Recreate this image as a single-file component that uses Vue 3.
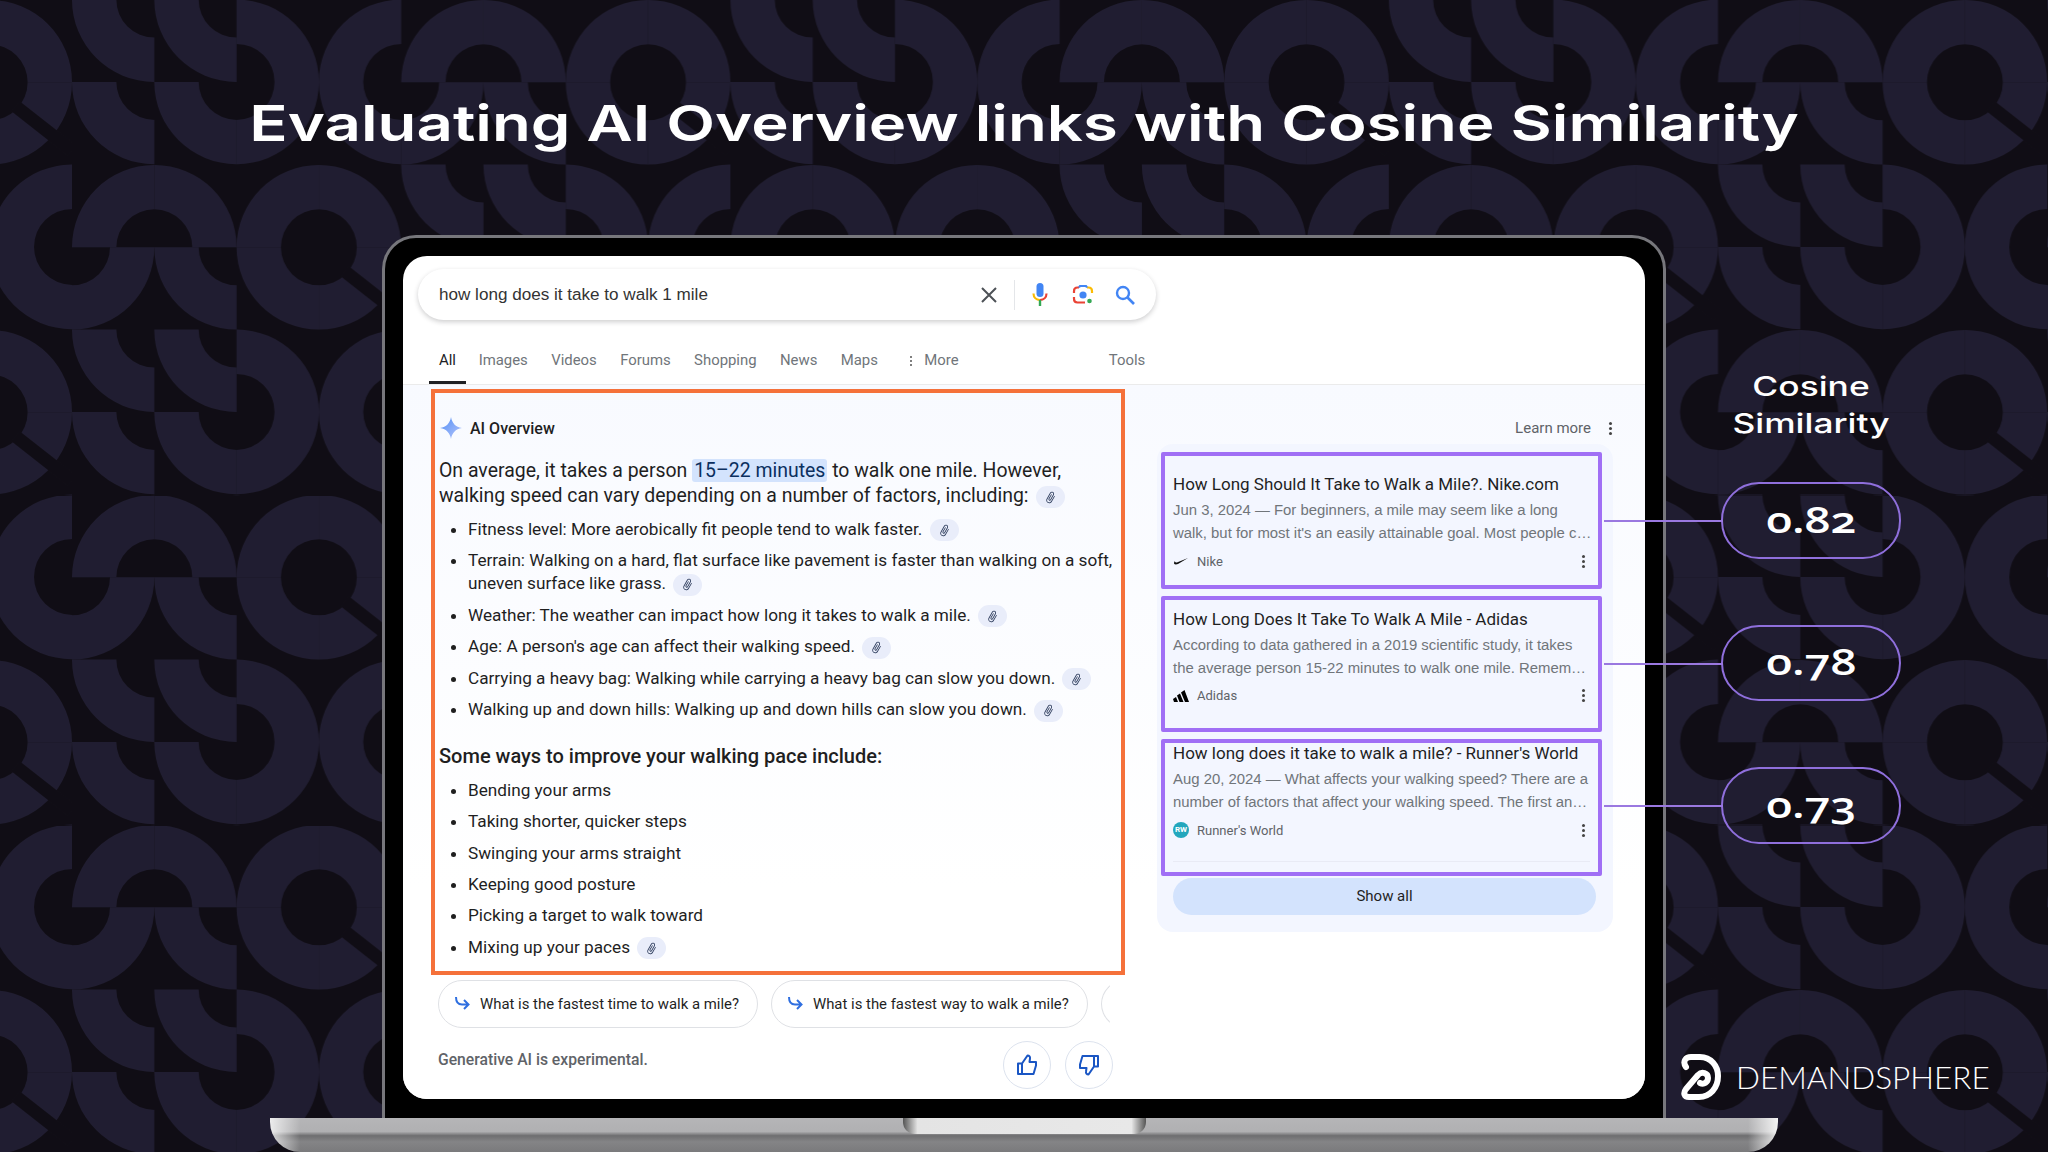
<template>
  <div class="page">
    <svg class="bg" width="2048" height="1152">
      <defs>
        <pattern id="tile" patternUnits="userSpaceOnUse" x="72" y="165" :width="unit * 2" height="330">
          <g v-for="u in units" :key="u.x + '-' + u.y" :transform="`translate(${u.x} ${u.y})`">
            <path v-for="d in quarters" :key="d" :d="d" fill="#201d31" />
            <line :x1="cell * 3 + 26" :y1="cell + 24" :x2="cell * 3 + 82" :y2="cell + 68" stroke="#100d15" stroke-width="13" />
          </g>
        </pattern>
      </defs>
      <rect width="2048" height="1152" fill="#100d15" />
      <rect width="2048" height="1152" fill="url(#tile)" />
    </svg>

    <h1 class="title">Evaluating AI Overview links with Cosine Similarity</h1>

    <div class="stage">
      <div class="laptop">
        <div class="screen">
          <div class="search">
            <span class="query">how long does it take to walk 1 mile</span>
            <svg class="ico-x" width="18" height="18" viewBox="0 0 18 18"><path d="M2 2l14 14M16 2L2 16" stroke="#4d5156" stroke-width="2" fill="none" /></svg>
            <span class="search-div"></span>
            <svg class="ico-mic" width="20" height="26" viewBox="0 0 20 26">
              <rect x="6.5" y="1" width="7" height="14" rx="3.5" fill="#4285f4" />
              <path d="M3.5 11.5c0 4 3 6.5 6.5 6.5" stroke="#fbbc04" stroke-width="2.2" fill="none" />
              <path d="M16.5 11.5c0 4-3 6.5-6.5 6.5" stroke="#ea4335" stroke-width="2.2" fill="none" />
              <path d="M10 18v6" stroke="#34a853" stroke-width="2.4" />
            </svg>
            <svg class="ico-lens" width="22" height="22" viewBox="0 0 22 22" fill="none">
              <path d="M2 9V7c0-2 1.500-3.500 3.500-3.500H7" stroke="#ea4335" stroke-width="2.200" />
              <path d="M15 3.500h1.500c2 0 3.500 1.500 3.500 3.500v2" stroke="#fbbc04" stroke-width="2.200" />
              <path d="M7 3.500l1-1.500h6l1 1.500" stroke="#4285f4" stroke-width="2.200" />
              <path d="M2 13v2c0 2 1.500 3.500 3.500 3.500H13" stroke="#ea4335" stroke-width="2.200" />
              <circle cx="11" cy="11" r="3.600" fill="#4285f4" />
              <circle cx="17.500" cy="17" r="2.300" fill="#34a853" />
            </svg>
            <svg class="ico-find" width="22" height="22" viewBox="0 0 22 22" fill="none"><circle cx="9" cy="9" r="6" stroke="#4285f4" stroke-width="2.400" /><path d="M13.500 13.500l6.500 6.500" stroke="#4285f4" stroke-width="2.600" /></svg>
          </div>

          <nav class="tabs">
            <span v-for="t in tabs" :key="t" class="tab" :class="{ on: t === 'All' }">{{ t }}</span>
            <span class="tab more"><i class="vdots small"></i>More</span>
            <span class="tab tools">Tools</span>
          </nav>

          <div class="results">
            <section class="overview">
              <div class="ai-box">
                <div class="ai-head">
                  <svg width="22" height="22" viewBox="0 0 22 22">
                    <defs>
                      <linearGradient id="spark" x1="0" y1="0" x2="1" y2="1">
                        <stop offset="0" stop-color="#4f8df5" />
                        <stop offset="1" stop-color="#b9c6fb" />
                      </linearGradient>
                    </defs>
                    <path d="M11 0c1 6 4.500 10 11 11-6.500 1-10 5-11 11-1-6-4.500-10-11-11 6.500-1 10-5 11-11z" fill="url(#spark)" />
                  </svg>
                  <span>AI Overview</span>
                </div>
                <p class="lead">
                  On average, it takes a person <mark>15–22 minutes</mark> to walk one mile. However,<br />
                  walking speed can vary depending on a number of factors, including:
                  <span class="clip"><svg width="13" height="13" viewBox="0 0 24 24"><path :d="clipPath" fill="#2b3a5a" /></svg></span>
                </p>
                <ul class="bullets first">
                  <li v-for="b in factors" :key="b.text">
                    {{ b.text }}
                    <span class="clip"><svg width="13" height="13" viewBox="0 0 24 24"><path :d="clipPath" fill="#2b3a5a" /></svg></span>
                  </li>
                </ul>
                <h2 class="subhead">Some ways to improve your walking pace include:</h2>
                <ul class="bullets second">
                  <li v-for="b in ways" :key="b.text">
                    {{ b.text }}
                    <span v-if="b.link" class="clip"><svg width="13" height="13" viewBox="0 0 24 24"><path :d="clipPath" fill="#2b3a5a" /></svg></span>
                  </li>
                </ul>
              </div>

              <div class="followups">
                <div v-for="q in followups" :key="q" class="chip">
                  <svg width="18" height="18" viewBox="0 0 18 18" fill="none"><path d="M3 2c0 5 2 7.500 6 7.500h6M11 5l4.500 4.500L11 14" stroke="#2f6fe0" stroke-width="2" /></svg>
                  <span>{{ q }}</span>
                </div>
                <div class="chip stub"></div>
              </div>

              <div class="foot">
                <span class="experimental">Generative AI is experimental.</span>
                <div class="thumbs">
                  <span class="thumb"><svg width="24" height="24" viewBox="0 0 24 24" fill="none"><path :d="thumbPath" stroke="#1a56c4" stroke-width="2" stroke-linejoin="round" /></svg></span>
                  <span class="thumb"><svg class="down" width="24" height="24" viewBox="0 0 24 24" fill="none"><path :d="thumbPath" stroke="#1a56c4" stroke-width="2" stroke-linejoin="round" /></svg></span>
                </div>
              </div>
            </section>

            <aside class="sources">
              <div class="learn"><span>Learn more</span><i class="vdots"></i></div>
              <div class="panel">
                <article v-for="c in cards" :key="c.source" class="card">
                  <h3>{{ c.title }}</h3>
                  <p v-for="l in c.lines" :key="l">{{ l }}</p>
                  <div class="src">
                    <span class="fav">
                      <svg v-if="c.source === 'Nike'" width="14" height="8" viewBox="0 0 14 8"><path d="M0 6.500C.5 7.500 2 7.800 4 7L14 1 3.500 5.200C2 5.800 .8 5.600 1 4 .2 4.800-.1 5.700 0 6.500z" fill="#111" /></svg>
                      <svg v-else-if="c.source === 'Adidas'" width="16" height="12" viewBox="0 0 16 12"><path d="M0 9l3-2 2 5H1zM4 5.500l3-2L10.500 12H6.500zM8 2.500L11.500 0 16 12h-4z" fill="#000" /></svg>
                      <span v-else class="rw">RW</span>
                    </span>
                    <span class="src-name">{{ c.source }}</span>
                    <i class="vdots"></i>
                  </div>
                  <div v-if="c.rule" class="rule"></div>
                </article>
                <div class="show-all">Show all</div>
              </div>
            </aside>
          </div>
        </div>
      </div>

      <div class="side">
        <h2 class="side-title">Cosine<br />Similarity</h2>
        <div class="pills">
          <div v-for="v in scores" :key="v" class="pill"><span>{{ v }}</span></div>
        </div>
        <div class="brand">
          <svg width="42" height="46" viewBox="0 0 42 46" fill="none">
            <path d="M6 13C2 7 6 3 11 3h9c11 0 18 9 18 19 0 12-8 21-19 21H9c-5 0-6-4-3-8l12-14c4-4 10-2 10 3 0 4-4 7-8 5" stroke="#fff" stroke-width="6" stroke-linecap="round" stroke-linejoin="round" />
          </svg>
          <span>DEMANDSPHERE</span>
        </div>
      </div>
    </div>

    <div class="base"><div class="notch"></div></div>
  </div>
</template>

<script setup>
const cell = 82.3
const unit = cell * 4
const r = 38

// quarter of a ring around grid point (c, w); corner is one of ul, ur, ll, lr
const quarter = (c, w, corner) => {
  const cx = c * cell
  const cy = w * cell
  const sx = corner[1] === 'l' ? -1 : 1
  const sy = corner[0] === 'u' ? -1 : 1
  const sweep = sx * sy > 0 ? 1 : 0
  return `M${cx + sx * cell} ${cy}A${cell} ${cell} 0 0 ${sweep} ${cx} ${cy + sy * cell}L${cx} ${cy + sy * r}A${r} ${r} 0 0 ${1 - sweep} ${cx + sx * r} ${cy}Z`
}

const quarters = [
  [1, 1, 'ul'], [1, 1, 'ur'],
  [3, 1, 'ul'], [3, 1, 'ur'], [3, 1, 'll'], [3, 1, 'lr'],
  [0, 1, 'lr'], [2, 1, 'll'],
  [1, 2, 'll'], [2, 2, 'll'], [2, 3, 'ur'], [4, 3, 'ul'],
  [1, 3, 'll'], [2, 3, 'll'], [2, 3, 'lr'], [4, 3, 'll']
].map(q => quarter(...q))

const units = [
  { x: 0, y: 0 },
  { x: unit, y: -165 },
  { x: unit, y: 165 }
]

const tabs = ['All', 'Images', 'Videos', 'Forums', 'Shopping', 'News', 'Maps']

const factors = [
  { text: 'Fitness level: More aerobically fit people tend to walk faster.' },
  { text: 'Terrain: Walking on a hard, flat surface like pavement is faster than walking on a soft, uneven surface like grass.' },
  { text: 'Weather: The weather can impact how long it takes to walk a mile.' },
  { text: "Age: A person's age can affect their walking speed." },
  { text: 'Carrying a heavy bag: Walking while carrying a heavy bag can slow you down.' },
  { text: 'Walking up and down hills: Walking up and down hills can slow you down.' }
]

const ways = [
  { text: 'Bending your arms' },
  { text: 'Taking shorter, quicker steps' },
  { text: 'Swinging your arms straight' },
  { text: 'Keeping good posture' },
  { text: 'Picking a target to walk toward' },
  { text: 'Mixing up your paces', link: true }
]

const followups = ['What is the fastest time to walk a mile?', 'What is the fastest way to walk a mile?']

const cards = [
  {
    title: 'How Long Should It Take to Walk a Mile?. Nike.com',
    lines: ['Jun 3, 2024 — For beginners, a mile may seem like a long', "walk, but for most it's an easily attainable goal. Most people c…"],
    source: 'Nike'
  },
  {
    title: 'How Long Does It Take To Walk A Mile - Adidas',
    lines: ['According to data gathered in a 2019 scientific study, it takes', 'the average person 15-22 minutes to walk one mile. Remem…'],
    source: 'Adidas'
  },
  {
    title: "How long does it take to walk a mile? - Runner's World",
    lines: ['Aug 20, 2024 — What affects your walking speed? There are a', 'number of factors that affect your walking speed. The first an…'],
    source: "Runner's World",
    rule: true
  }
]

const scores = ['0.82', '0.78', '0.73']

const clipPath = 'M16.5 6v11.5c0 2.21-1.79 4-4 4s-4-1.79-4-4V5c0-1.38 1.12-2.5 2.5-2.5s2.5 1.12 2.5 2.5v10.5c0 .55-.45 1-1 1s-1-.45-1-1V6H10v9.5c0 1.38 1.12 2.5 2.5 2.5s2.5-1.12 2.5-2.5V5c0-2.21-1.79-4-4-4S7 2.79 7 5v12.5c0 3.04 2.46 5.5 5.5 5.500s5.5-2.46 5.5-5.500V6h-1.5z'
const thumbPath = 'M7 10.500V21H3V10.500zM7 10.500L12.500 2.500c1.800 0 2.800 1.200 2.500 3L14.500 9H21v3.500L18.500 21H7'
</script>

<style>
html, body { margin: 0; background: #100d15; }
</style>

<style scoped>
.page {
  position: relative;
  width: 2048px;
  height: 1152px;
  overflow: hidden;
  display: flex;
  flex-direction: column;
  align-items: center;
  font-family: Roboto, "Liberation Sans", sans-serif;
}
.bg { position: absolute; left: 0; top: 0; }
.title {
  position: relative;
  margin: 93px 0 82px;
  height: 60px;
  font: 600 50px/60px Inter, sans-serif;
  color: #fff;
  white-space: nowrap;
  transform: scaleX(1.27);
}
.stage {
  position: relative;
  width: 2048px;
  height: 883px;
  display: grid;
  grid-template-columns: 382px 1284px 382px;
}
.laptop {
  grid-column: 2;
  box-sizing: border-box;
  height: 883px;
  padding: 18px 18px 19px;
  background: #000;
  border: solid #77777c;
  border-width: 3px 3px 0;
  border-radius: 34px 34px 0 0;
}
.screen {
  height: 843px;
  background: #fff;
  border-radius: 24px;
  overflow: hidden;
  position: relative;
}

.search {
  box-sizing: border-box;
  margin: 13px 0 0 15px;
  width: 738px;
  height: 51px;
  border-radius: 26px;
  background: #fff;
  box-shadow: 0 2px 5px rgba(32, 33, 36, 0.22);
  display: flex;
  align-items: center;
  padding: 0 20px 0 21px;
}
.query { font: 17.1px "Liberation Sans", sans-serif; color: #333; flex: 1; padding-top: 1px; }
.ico-x { margin-right: 16px; }
.search-div { width: 1px; height: 30px; background: #e4e6e9; margin-right: 15px; }
.ico-mic { margin-right: 22px; }
.ico-lens { margin-right: 20px; }

.tabs {
  display: flex;
  height: 65px;
  box-sizing: border-box;
  padding: 0 488px 0 25px;
  border-bottom: 1px solid #ebebeb;
  align-items: flex-end;
}
.tab {
  font-size: 14.9px;
  color: #70757a;
  padding: 0 11.700px;
  height: 38px;
  line-height: 29px;
  box-sizing: border-box;
  white-space: nowrap;
}
.tab.on { color: #202124; border-bottom: 3px solid #202124; padding: 0 10.500px; margin: 0 0.500px 0 0.500px; }
.tab.more { display: flex; align-items: flex-start; margin-left: 9px; }
.tab.tools { margin-left: auto; }
.vdots { display: block; width: 3px; height: 3px; border-radius: 50%; background: #444; box-shadow: 0 5px #444, 0 -5px #444; }
.vdots.small { width: 2px; height: 2px; background: #555; box-shadow: 0 4px #555, 0 -4px #555; margin: 14px 12px 0 0; }

.results {
  display: grid;
  grid-template-columns: 694px 456px;
  column-gap: 32px;
  padding: 4px 0 0 28px;
  height: 715px;
  background: linear-gradient(#f8faff, #fff 70%);
}
.ai-box {
  box-sizing: border-box;
  height: 586px;
  border: 4px solid #f5713a;
  padding: 25px 4px 0 4px;
}
.ai-head { display: flex; align-items: center; gap: 8px; font-size: 16px; font-weight: 500; color: #1f1f1f; height: 20px; margin-left: 1px; }
.lead { margin: 20px 0 0; font-size: 19.45px; line-height: 25.3px; color: #1f1f1f; white-space: nowrap; }
mark { background: #d3e3fd; color: #0b2f5f; border-radius: 3px; padding: 0 2px; }
.clip {
  display: inline-flex;
  width: 29px;
  height: 22px;
  margin: -4px 0 -4px 3px;
  border-radius: 11px;
  background: #e9edfa;
  align-items: center;
  justify-content: center;
  vertical-align: middle;
}
.clip svg { transform: rotate(30deg); }
.bullets { margin: 9px 0 0; padding: 0 0 0 29px; font-size: 17.2px; line-height: 23px; color: #1f1f1f; }
.bullets li { margin-bottom: 8.500px; }
.bullets.second li { margin-bottom: 8.300px; }
.bullets li:last-child { margin-bottom: 0; }
.subhead { margin: 23px 0 10px; font-size: 20px; line-height: 25px; font-weight: 500; color: #1f1f1f; }
.subhead + .bullets { margin-top: 0; }

.followups { display: flex; gap: 13px; width: 672px; margin: 5px 0 0 7px; overflow: hidden; }
.chip {
  flex-shrink: 0;
  box-sizing: border-box;
  height: 48px;
  padding: 0 18px 0 14px;
  border: 1px solid #dfe1e5;
  border-radius: 24px;
  display: flex;
  align-items: center;
  gap: 9px;
  font-size: 14.9px;
  color: #1f1f1f;
}
.chip.stub { width: 40px; border-right: 0; border-radius: 24px 0 0 24px; }
.foot { display: flex; justify-content: space-between; margin: 13px 12px 0 7px; }
.experimental { font-size: 15.7px; font-weight: 500; color: #5f6368; margin-top: 9px; line-height: 20px; }
.thumbs { display: flex; gap: 14px; }
.thumb { width: 48px; height: 48px; border-radius: 50%; border: 1px solid #dde3ee; box-sizing: border-box; display: flex; align-items: center; justify-content: center; }
.down { transform: rotate(180deg); }

.learn { display: flex; justify-content: flex-end; align-items: center; gap: 18px; height: 20px; margin-top: 29px; padding-right: 1px; font-size: 15px; color: #5f6368; }
.panel {
  margin-top: 6px;
  padding: 8px 11px 17px 4px;
  border-radius: 16px;
  background: #f3f6ff;
}
.card {
  box-sizing: border-box;
  height: 136.500px;
  margin-bottom: 7px;
  border: 4px solid #a06ff5;
  border-radius: 2px;
  padding: 17px 8px 0;
  overflow: hidden;
}
.card:nth-child(2) { padding-top: 8px; }
.card:nth-child(3) { padding-top: 0; margin-bottom: 2px; }
.card:nth-child(3) h3 { margin-top: -1px; }
.card h3 { margin: 0 0 4px; font-size: 17px; line-height: 22px; font-weight: 400; color: #1f1f1f; white-space: nowrap; }
.card p { margin: 0; font: 14.9px/23px "Liberation Sans", sans-serif; color: #70757a; white-space: nowrap; }
.src { display: flex; align-items: center; height: 20px; margin-top: 6px; font-size: 13px; color: #5f6368; }
.fav { width: 16px; height: 16px; border-radius: 50%; margin-right: 8px; display: flex; align-items: center; justify-content: center; }
.src-name { flex: 1; }
.src .vdots { margin-right: 5px; }
.rw { width: 16px; height: 16px; border-radius: 50%; background: #23a7bd; color: #fff; font-size: 8px; font-weight: 700; line-height: 16px; text-align: center; }
.rule { height: 1px; background: #e9ebf5; margin-top: 21px; }
.show-all {
  margin: 0 6px 0 12px;
  height: 37px;
  border-radius: 19px;
  background: #d3e3fd;
  text-align: center;
  font-size: 15px;
  line-height: 37px;
  color: #1f1f1f;
}

.side { grid-column: 3; display: flex; flex-direction: column; padding-left: 14px; }
.side-title {
  margin: 134px 0 0 41px;
  width: 180px;
  font: 500 27px/36.500px Inter, sans-serif;
  color: #fff;
  text-align: center;
  transform: scaleX(1.31);
}
.pills { margin: 40px 0 0 41px; display: flex; flex-direction: column; gap: 66px; }
.pill {
  position: relative;
  box-sizing: border-box;
  width: 180px;
  height: 76.500px;
  border: 2px solid #8f6fdc;
  border-radius: 38px;
  display: flex;
  align-items: center;
  justify-content: center;
  padding-bottom: 2px;
  color: #fff;
  font: 600 36px "Open Sans", sans-serif;
  font-variant-numeric: oldstyle-nums;
}
.pill span { transform: scaleX(1.28); }
.pill::before {
  content: "";
  position: absolute;
  right: 100%;
  top: 50%;
  width: 119px;
  height: 2px;
  background: #9a78e0;
}
.brand { display: flex; align-items: center; gap: 14px; margin-top: 210px; color: #fff; font: 300 31.500px Lato, sans-serif; }

.base {
  width: 1508px;
  height: 34px;
  flex-shrink: 0;
  display: flex;
  justify-content: center;
  position: relative;
  border-radius: 0 0 30px 30px;
  background:
    linear-gradient(90deg, rgba(255, 255, 255, 0.75), rgba(255, 255, 255, 0) 2%, rgba(255, 255, 255, 0) 98%, rgba(255, 255, 255, 0.85)),
    linear-gradient(#b5b5b7 0, #b0b0b2 40%, #6e6e70 52%, #848486 70%, #7a7a7c 100%);
}
.notch {
  width: 243px;
  height: 16px;
  border-radius: 0 0 12px 12px;
  background: linear-gradient(90deg, #555, #e4e4e4 6%, #e8e8e8 94%, #555);
}
</style>
